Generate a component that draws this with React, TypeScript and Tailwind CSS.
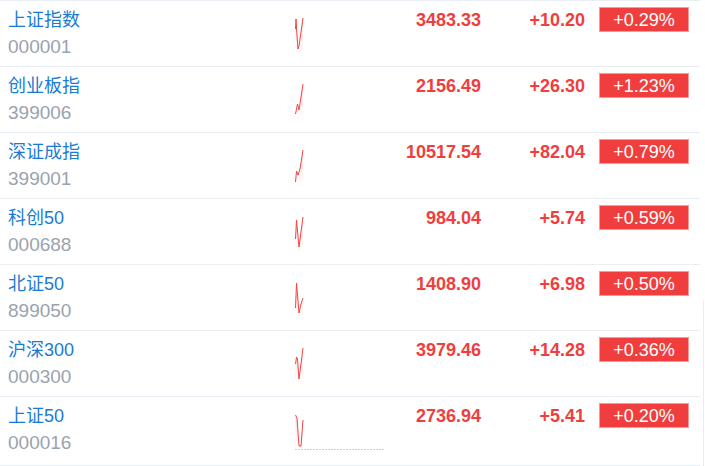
const rows = [
  { name: '上证指数', code: '000001', price: '3483.33', change: '+10.20', pct: '+0.29%', line: '0.5,28 1,18 1.7,30 3,48 4,45 8,17' },
  { name: '创业板指', code: '399006', price: '2156.49', change: '+26.30', pct: '+1.23%', line: '0.5,47 2.5,37 4,43 8,17' },
  { name: '深证成指', code: '399001', price: '10517.54', change: '+82.04', pct: '+0.79%', line: '0.5,49 1.5,38 3,42 5,36 8,17' },
  { name: '科创50', code: '000688', price: '984.04', change: '+5.74', pct: '+0.59%', line: '0.5,40 1.5,21 4,48 8,18' },
  { name: '北证50', code: '899050', price: '1408.90', change: '+6.98', pct: '+0.50%', line: '0.5,43 1.5,18 4,48 6,39 8,33' },
  { name: '沪深300', code: '000300', price: '3979.46', change: '+14.28', pct: '+0.36%', line: '0.5,33 1.5,26 2.5,28 4,48 8,17' },
  { name: '上证50', code: '000016', price: '2736.94', change: '+5.41', pct: '+0.20%', line: '0.5,18 2,21 4,49 6,49 8,23', base: true },
]

function Spark({ line, base, id }: { line: string; base?: boolean; id: number }) {
  const pts = line.split(' ')
  const first = pts[0].split(',')[0]
  const last = pts[pts.length - 1].split(',')[0]
  return (
    <svg width="90" height="66" viewBox="0 0 90 66" className="shrink-0">
      <defs>
        <linearGradient id={`g${id}`} x1="0" y1="0" x2="0" y2="1">
          <stop offset="0" stopColor="#f04040" stopOpacity="0.18" />
          <stop offset="1" stopColor="#f04040" stopOpacity="0" />
        </linearGradient>
      </defs>
      <polygon points={`${line} ${last},54 ${first},54`} fill={`url(#g${id})`} />
      <polyline points={line} fill="none" stroke="#f04545" strokeWidth="1" strokeLinejoin="round" />
      {base && <line x1="0" y1="52.5" x2="90" y2="52.5" stroke="#d0d0d0" strokeWidth="1" strokeDasharray="2 1" />}
    </svg>
  )
}

export default function App() {
  return (
    <div className="flex w-[705px] bg-white" style={{ fontFamily: '"Liberation Sans", "Noto Sans CJK SC", sans-serif' }}>
      <div className="w-[700px] border-b border-[#e8eef4]">
        {rows.map((r, i) => (
          <div key={r.code} className="flex h-[66px] items-start border-t border-[#e8eef4] pl-2">
            <div className="w-[287px] shrink-0">
              <div className="pt-[7px] text-[18px] leading-[24px] text-[#1a7bd3]">{r.name}</div>
              <div className="mt-[3px] text-[19px] leading-[24px] text-[#9aa3ae]">{r.code}</div>
            </div>
            <Spark line={r.line} base={r.base} id={i} />
            <div className="w-[96px] shrink-0 pt-[7px] text-right text-[18px] font-bold leading-[24px] text-[#f03e3e]">{r.price}</div>
            <div className="w-[104px] shrink-0 pt-[7px] text-right text-[18px] font-bold leading-[24px] text-[#f03e3e]">{r.change}</div>
            <div className="ml-[14px] mt-[6px] flex h-[25px] w-[90px] shrink-0 items-center justify-center border border-[#f69a9a] bg-[#f03e3e] text-[18px] leading-none text-white">
              {r.pct}
            </div>
          </div>
        ))}
      </div>
      <div className="w-[5px]">
        <div className="ml-[3px] mt-[300px] h-[166px] border-l border-[#ececec]" />
      </div>
    </div>
  )
}
